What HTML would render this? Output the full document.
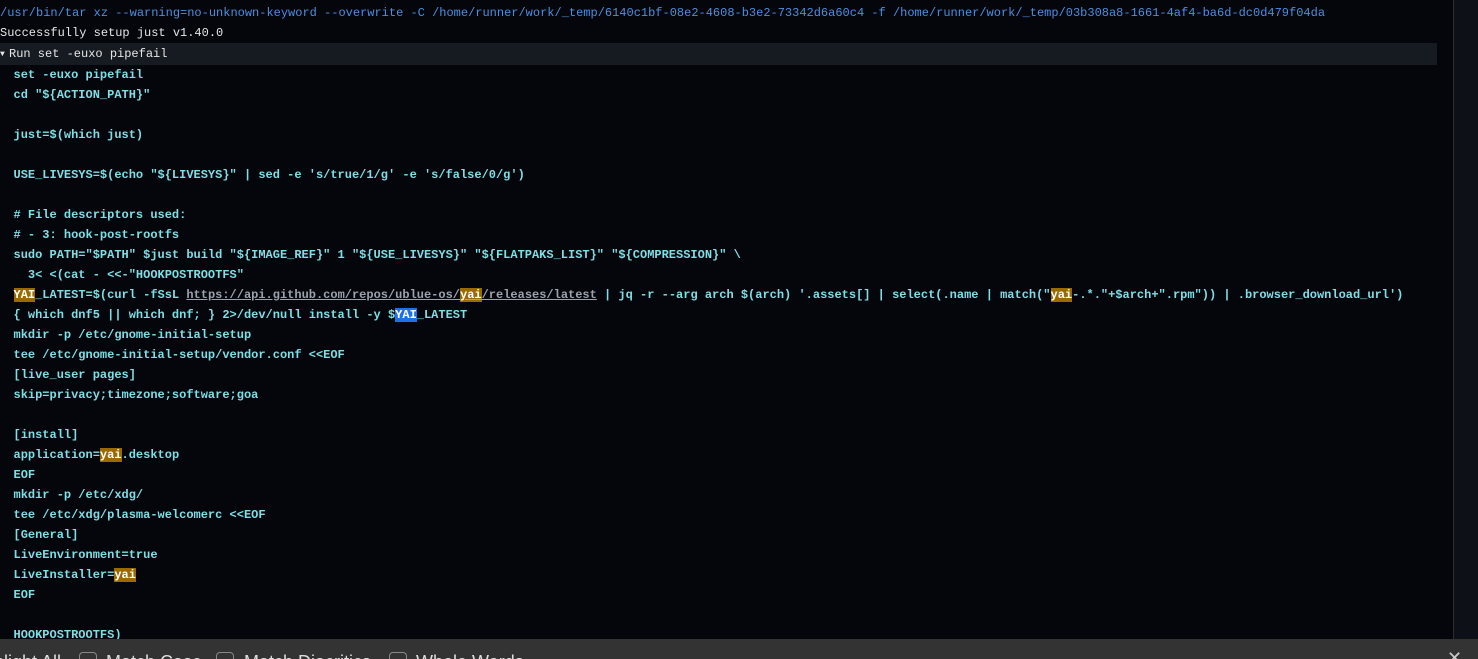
<!DOCTYPE html>
<html><head><style>
body{margin:0;width:1478px;height:659px;background:#04060b;overflow:hidden;position:relative;font-family:"Liberation Mono",monospace;font-size:12px}
.l{position:absolute;left:0;white-space:pre;height:20px;line-height:20px}
.c{color:#7fdfe6;font-weight:bold;left:13.5px}
.h{background:#9a6a00;color:#fff}
.s{background:#1f6feb;color:#fff}
.u{color:#9aa3ad;text-decoration:underline}
#sb{position:absolute;left:1453px;top:0;width:25px;height:639px;background:#0d1117;border-left:1px solid #2a2f36}
#fb{position:absolute;left:0;top:639px;width:1478px;height:20px;background:#333;font-family:"Liberation Sans",sans-serif;font-size:18px;color:#ddd;overflow:hidden}
.cb{position:absolute;top:13px;width:16px;height:16px;border:1.5px solid #888;border-radius:4px}
.ft{position:absolute;top:13px;white-space:pre;line-height:20px}
</style></head><body>
<div class="l" style="top:3px;color:#4b8fe2">/usr/bin/tar xz --warning=no-unknown-keyword --overwrite -C /home/runner/work/_temp/6140c1bf-08e2-4608-b3e2-73342d6a60c4 -f /home/runner/work/_temp/03b308a8-1661-4af4-ba6d-dc0d479f04da</div>
<div class="l" style="top:23px;color:#e6e6e6">Successfully setup just v1.40.0</div>
<div class="l" style="top:43px;height:22px;line-height:23px;width:1437px;background:#161a21;color:#e6e6e6"><span style="font-size:8px;position:relative;top:-1px;display:inline-block;width:9px">▼</span>Run set -euxo pipefail</div>
<div class="l c" style="top:65px">set -euxo pipefail</div>
<div class="l c" style="top:85px">cd "${ACTION_PATH}"</div>
<div class="l c" style="top:125px">just=$(which just)</div>
<div class="l c" style="top:165px">USE_LIVESYS=$(echo "${LIVESYS}" | sed -e 's/true/1/g' -e 's/false/0/g')</div>
<div class="l c" style="top:205px"># File descriptors used:</div>
<div class="l c" style="top:225px"># - 3: hook-post-rootfs</div>
<div class="l c" style="top:245px">sudo PATH="$PATH" $just build "${IMAGE_REF}" 1 "${USE_LIVESYS}" "${FLATPAKS_LIST}" "${COMPRESSION}" \</div>
<div class="l c" style="top:265px">  3&lt; &lt;(cat - &lt;&lt;-"HOOKPOSTROOTFS"</div>
<div class="l c" style="top:285px"><span class="h">YAI</span>_LATEST=$(curl -fSsL <span class="u">https://api.github.com/repos/ublue-os/<span class="h">yai</span>/releases/latest</span> | jq -r --arg arch $(arch) '.assets[] | select(.name | match("<span class="h">yai</span>-.*."+$arch+".rpm")) | .browser_download_url')</div>
<div class="l c" style="top:305px">{ which dnf5 || which dnf; } 2&gt;/dev/null install -y $<span class="s">YAI</span>_LATEST</div>
<div class="l c" style="top:325px">mkdir -p /etc/gnome-initial-setup</div>
<div class="l c" style="top:345px">tee /etc/gnome-initial-setup/vendor.conf &lt;&lt;EOF</div>
<div class="l c" style="top:365px">[live_user pages]</div>
<div class="l c" style="top:385px">skip=privacy;timezone;software;goa</div>
<div class="l c" style="top:425px">[install]</div>
<div class="l c" style="top:445px">application=<span class="h">yai</span>.desktop</div>
<div class="l c" style="top:465px">EOF</div>
<div class="l c" style="top:485px">mkdir -p /etc/xdg/</div>
<div class="l c" style="top:505px">tee /etc/xdg/plasma-welcomerc &lt;&lt;EOF</div>
<div class="l c" style="top:525px">[General]</div>
<div class="l c" style="top:545px">LiveEnvironment=true</div>
<div class="l c" style="top:565px">LiveInstaller=<span class="h">yai</span></div>
<div class="l c" style="top:585px">EOF</div>
<div class="l c" style="top:625px">HOOKPOSTROOTFS)</div>
<div id="sb"></div>
<div id="fb">
<span class="ft" style="left:-33px">Highlight All</span>
<span class="cb" style="left:79px"></span><span class="ft" style="left:106px">Match Case</span>
<span class="cb" style="left:216px"></span><span class="ft" style="left:244px">Match Diacritics</span>
<span class="cb" style="left:389px"></span><span class="ft" style="left:416px">Whole Words</span>
<span class="ft" style="left:1447px;top:9px;color:#ccc">✕</span>
</div>
</body></html>
